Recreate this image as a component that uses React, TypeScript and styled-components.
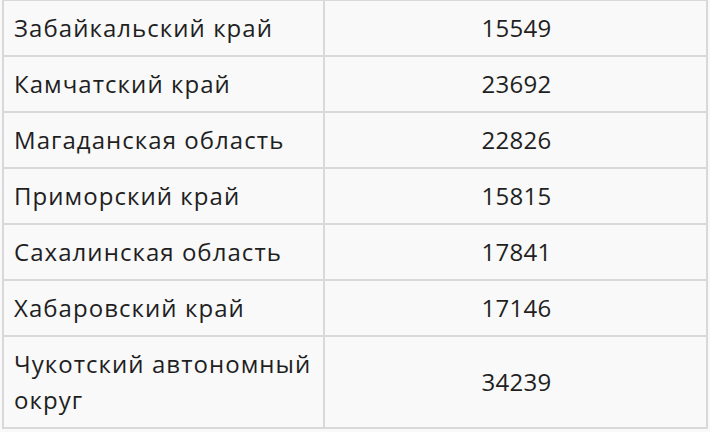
import React from "react";
import styled, { createGlobalStyle } from "styled-components";

const Global = createGlobalStyle`
  html, body {
    margin: 0;
    padding: 0;
    background: #ffffff;
  }
  body {
    font-family: "Open Sans", "Noto Sans", "DejaVu Sans", sans-serif;
    color: #222222;
  }
`;

const Frame = styled.div`
  width: 710px;
  height: 432px;
  overflow: hidden;
  background: #f9f9f9;
  padding-left: 2px;
  box-sizing: border-box;
`;

const Table = styled.table`
  border-collapse: collapse;
  width: 706px;
  margin-top: -1px;
  background: #f9f9f9;
  table-layout: fixed;
`;

const Cell = styled.td<{ $numeric?: boolean }>`
  border: 2px solid #d9d9d9;
  padding: 9px 8px 9px 10px;
  font-size: 24px;
  line-height: 36px;
  font-weight: 400;
  color: #1f1f1f;
  letter-spacing: ${(p) => (p.$numeric ? "0.3px" : "1.05px")};
  text-align: ${(p) => (p.$numeric ? "center" : "left")};
  vertical-align: middle;
`;

const rows: [string, string][] = [
  ["Забайкальский край", "15549"],
  ["Камчатский край", "23692"],
  ["Магаданская область", "22826"],
  ["Приморский край", "15815"],
  ["Сахалинская область", "17841"],
  ["Хабаровский край", "17146"],
  ["Чукотский автономный округ", "34239"],
];

export default function App() {
  return (
    <Frame>
      <Global />
      <Table>
        <colgroup>
          <col style={{ width: 321 }} />
          <col />
        </colgroup>
        <tbody>
          {rows.map(([name, value]) => (
            <tr key={name}>
              <Cell>{name}</Cell>
              <Cell $numeric>{value}</Cell>
            </tr>
          ))}
        </tbody>
      </Table>
    </Frame>
  );
}
